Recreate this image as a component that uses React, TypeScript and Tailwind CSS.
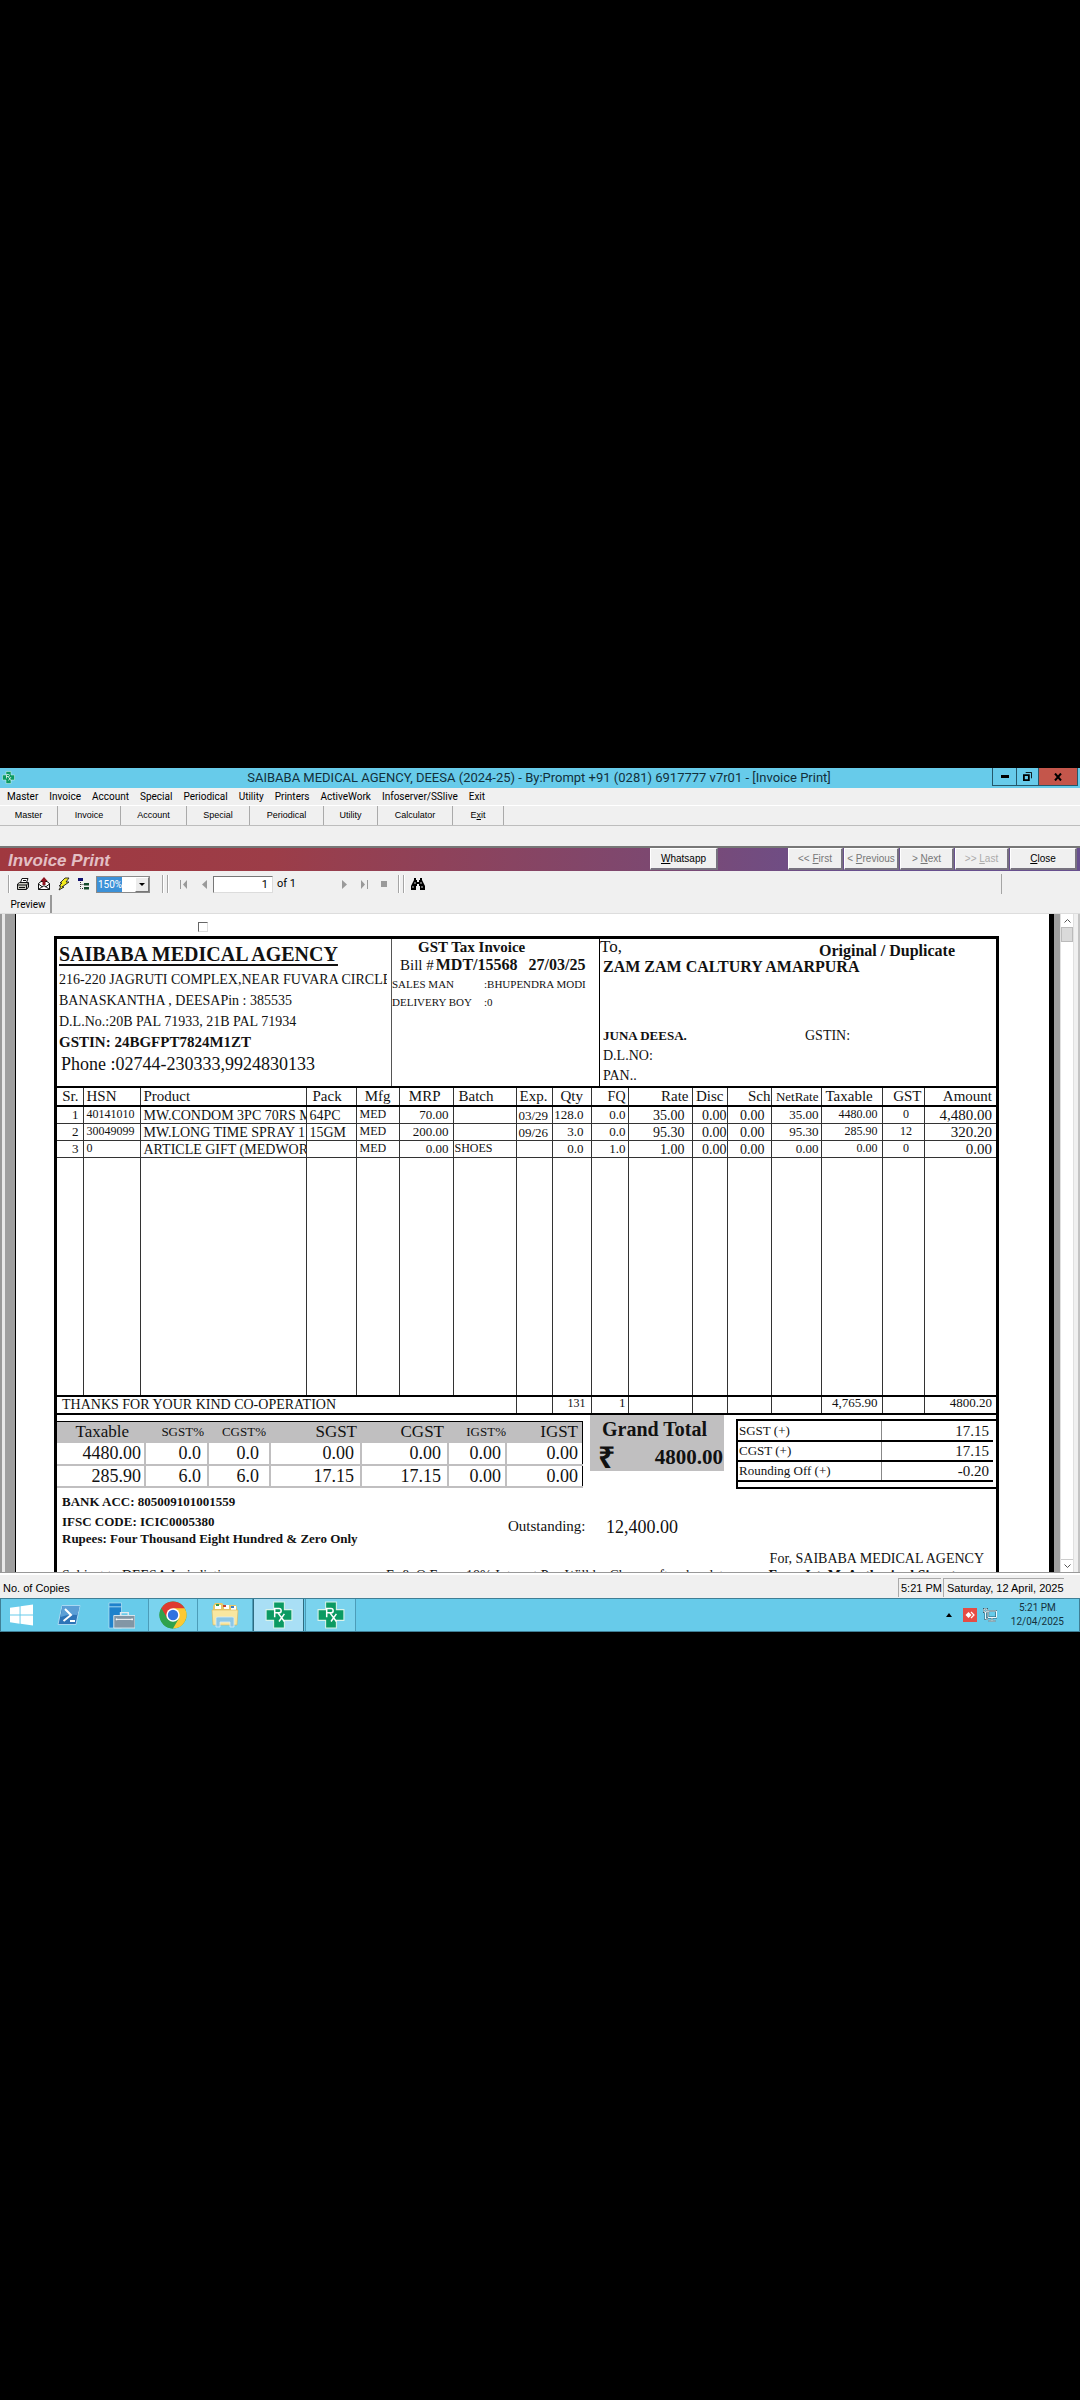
import { useState, type ReactNode } from 'react';

const MENU = [
  'Master',
  'Invoice',
  'Account',
  'Special',
  'Periodical',
  'Utility',
  'Printers',
  'ActiveWork',
  'Infoserver/SSlive',
  'Exit',
];

const TOOLS: [string, string][] = [
  ['Master', 'w-[58px]'],
  ['Invoice', 'w-[63px]'],
  ['Account', 'w-[66px]'],
  ['Special', 'w-[63px]'],
  ['Periodical', 'w-[74px]'],
  ['Utility', 'w-[54px]'],
  ['Calculator', 'w-[75px]'],
];

const num = 'px-1 text-right text-[13px] align-top';
const COLUMNS: { label: string; col: string; head: string; cell: string }[] = [
  { label: 'Sr.', col: 'w-[26px]', head: 'text-right pr-1', cell: num },
  { label: 'HSN', col: 'w-[57px]', head: 'pl-[3px]', cell: 'pl-[3px] text-[12px] align-top' },
  { label: 'Product', col: '', head: 'pl-[3px]', cell: 'pl-[3px] text-[14px] align-bottom' },
  { label: 'Pack', col: 'w-[50px]', head: 'pl-[6px]', cell: 'pl-[3px] text-[14px] align-bottom' },
  { label: 'Mfg', col: 'w-[43px]', head: 'text-right pr-2', cell: 'pl-[3px] text-[12px] align-top' },
  { label: 'MRP', col: 'w-[54px]', head: 'text-right pr-3', cell: num },
  { label: 'Batch', col: 'w-[63px]', head: 'pl-[5px]', cell: 'pl-px text-[12px] align-top' },
  { label: 'Exp.', col: 'w-[36px]', head: 'pl-[3px]', cell: 'pl-[2px] text-[13px] align-bottom' },
  { label: 'Qty', col: 'w-[39px]', head: 'pl-2', cell: 'text-right pr-[7px] text-[13px] align-top' },
  { label: 'FQ', col: 'w-[37px]', head: 'text-right pr-[2px] text-[14px]', cell: 'text-right pr-[2px] text-[13px] align-top' },
  { label: 'Rate', col: 'w-[64px]', head: 'text-right pr-[3px]', cell: 'text-right pr-[7px] text-[14px] align-bottom' },
  { label: 'Disc', col: 'w-[35px]', head: 'text-right pr-[3px]', cell: 'text-right text-[14px] align-bottom' },
  { label: 'Sch', col: 'w-[44px]', head: 'text-right', cell: 'text-right pr-[6px] text-[14px] align-bottom' },
  { label: 'NetRate', col: 'w-[50px]', head: 'text-right pr-[2px] text-[13px]', cell: 'text-right pr-[2px] text-[13px] align-top' },
  { label: 'Taxable', col: 'w-[61px]', head: 'pl-1', cell: 'text-right pr-1 text-[12px] align-top' },
  { label: 'GST', col: 'w-[42px]', head: 'text-right pr-[2px]', cell: 'text-center pl-[6px] text-[12px] align-top' },
  { label: 'Amount', col: 'w-[72px]', head: 'text-right pr-1', cell: 'text-right pr-1 text-[15px] align-bottom' },
];

const ITEMS = [
  ['1', '40141010', 'MW.CONDOM 3PC 70RS M', '64PC', 'MED', '70.00', '', '03/29', '128.0', '0.0', '35.00', '0.00', '0.00', '35.00', '4480.00', '0', '4,480.00'],
  ['2', '30049099', 'MW.LONG TIME SPRAY 1', '15GM', 'MED', '200.00', '', '09/26', '3.0', '0.0', '95.30', '0.00', '0.00', '95.30', '285.90', '12', '320.20'],
  ['3', '0', 'ARTICLE GIFT (MEDWOR', '', 'MED', '0.00', 'SHOES', '', '0.0', '1.0', '1.00', '0.00', '0.00', '0.00', '0.00', '0', '0.00'],
];

const TAX_HEAD: [string, string][] = [
  ['Taxable', 'w-[88px] pr-4 text-[17px]'],
  ['SGST%', 'w-[63px] pr-1 text-[13px]'],
  ['CGST%', 'w-[62px] pr-1 text-[13px]'],
  ['SGST', 'w-[91px] pr-1 text-[17px]'],
  ['CGST', 'w-[87px] pr-1 text-[17px]'],
  ['IGST%', 'w-[58px] text-[13px]'],
  ['IGST', 'pr-1 text-[17px]'],
];

const TAX_ROWS = [
  ['4480.00', '0.0', '0.0', '0.00', '0.00', '0.00', '0.00'],
  ['285.90', '6.0', '6.0', '17.15', '17.15', '0.00', '0.00'],
];

const TAX_PAD = ['pr-[3px]', 'pr-[6px]', 'pr-[10px]', 'pr-[6px]', 'pr-[6px]', 'pr-[4px]', 'pr-[4px]'];

const SUMMARY = [
  ['SGST (+)', '17.15'],
  ['CGST (+)', '17.15'],
  ['Rounding Off (+)', '-0.20'],
];

function RxLogo({ className }: { className: string }) {
  return (
    <svg viewBox="0 0 26 26" className={className} aria-hidden="true">
      <path d="M8 1h10v7h7v10h-7v7H8v-7H1V8h7z" fill="#0b9a62" stroke="#d8f3ea" strokeWidth="1" />
      <path
        d="M9 15V7h4q2 0 2 2t-2 2H9m3 0 6 8m0-7-5 7"
        fill="none"
        stroke="#fff"
        strokeWidth="1.4"
      />
    </svg>
  );
}

function TitleBar() {
  return (
    <header className="flex h-[20px] items-start bg-[#67cbea] pr-[2px] text-[#12303b]">
      <RxLogo className="ml-[2px] mt-[3px] h-[13px] w-[13px]" />
      <h1 className="flex-1 pl-[71px] text-center font-[Roboto,sans-serif] text-[13px] leading-[20px]">
        SAIBABA MEDICAL AGENCY, DEESA (2024-25) - By:Prompt +91 (0281) 6917777 v7r01 - [Invoice Print]
      </h1>
      <div className="flex h-[18px] border border-t-0 border-[#24586a] text-black">
        <button aria-label="Minimize" className="flex w-[23px] items-center justify-center">
          <span className="h-[3px] w-2 bg-black" />
        </button>
        <button
          aria-label="Restore"
          className="flex w-[23px] items-center justify-center border-x border-[#24586a]"
        >
          <svg viewBox="0 0 10 10" className="h-[9px] w-[9px]" fill="none" stroke="#000">
            <path d="M1 3.5h5.5V9H1z" strokeWidth="2" />
            <path d="M3 .5h6.5V7" strokeWidth="1" />
          </svg>
        </button>
        <button aria-label="Close window" className="flex w-[38px] items-center justify-center bg-[#c4564b]">
          <svg viewBox="0 0 8 8" className="h-2 w-2" stroke="#000" strokeWidth="2">
            <path d="M1 .5l6 7M7 .5l-6 7" />
          </svg>
        </button>
      </div>
    </header>
  );
}

function BandButton({
  children,
  className,
  disabled,
}: {
  children: ReactNode;
  className: string;
  disabled?: boolean;
}) {
  return (
    <button
      disabled={disabled}
      className={`h-[22px] border border-b-2 border-r-2 border-b-[#77727f] border-l-white border-r-[#77727f] border-t-white bg-[#f0f0f0] text-[10px] ${className}`}
    >
      {children}
    </button>
  );
}

function Grip() {
  return <span className="h-[18px] w-px bg-[#a5a5a5] shadow-[1px_0_0_#fff]" />;
}

function ViewerToolbar() {
  const [page, setPage] = useState('1');
  const btn = 'flex h-[18px] shrink-0 items-center justify-center';
  return (
    <div className="flex h-[24px] items-center pl-[8px] pt-[2px] text-[10px]">
      <Grip />
      <button aria-label="Print" className={`${btn} ml-[7px] w-[14px]`}>
        <svg viewBox="0 0 14 14" className="h-[14px] w-[14px]" fill="#fff" stroke="#111">
          <path d="M4.500 5.500 6 1.500h6l-1.500 4" />
          <path d="M1.500 7 3.500 5.500h9V10l-2 2.500h-9z" fill="#c9c9c0" />
          <path d="M1.500 8h9v4M10.500 8l2-2M3 10.500h6M7 3.500h3" fill="none" />
        </svg>
      </button>
      <button aria-label="Export" className={`${btn} ml-[7px] w-[14px]`}>
        <svg viewBox="0 0 14 14" className="h-[14px] w-[14px]">
          <path d="M1.500 6.500 4 4.500h6l2.500 2v6h-11z" fill="#fff" stroke="#111" />
          <path d="M1.500 12.500 6 9h2l4.500 3.500M1.500 7l4 3M12.500 7l-4 3" fill="none" stroke="#111" />
          <path d="M7 0l3.500 4H8.500v4h-3V4h-2z" fill="#8d1420" />
        </svg>
      </button>
      <button aria-label="Refresh" className={`${btn} ml-[6px] w-[14px]`}>
        <svg viewBox="0 0 14 14" className="h-[14px] w-[14px]">
          <path d="M8 1h4L9 5h3L5 10h2l-5 3 2-4H2l3-3H3z" fill="#f3ea1d" stroke="#222" strokeWidth=".9" />
        </svg>
      </button>
      <button aria-label="Group tree" className={`${btn} ml-[6px] w-[14px]`}>
        <svg viewBox="0 0 14 14" className="h-[14px] w-[14px]">
          <path d="M1 1h5v3H1z" fill="#10106e" />
          <path d="M3.500 5v6.500H7M3.500 7.500H7" fill="none" stroke="#333" strokeDasharray="1 1" />
          <path d="M7 6h5v2.500H7zM7 10h5v2.500H7z" fill="#144a2b" />
        </svg>
      </button>
      <div className="relative ml-[5px] h-[17px] w-[54px] shrink-0 border border-[#8a8a8a] bg-white">
        <select
          aria-label="Zoom"
          className="h-full w-full appearance-none bg-[linear-gradient(90deg,#3c91d8_25px,#fff_25px)] pl-px font-[Roboto,sans-serif] text-[10px] leading-[14px] text-white outline-none"
        >
          <option>150%</option>
        </select>
        <span className="pointer-events-none absolute inset-y-0 right-0 flex w-[14px] items-center justify-center border border-b-[#777] border-r-[#777] border-white bg-[#ececec]">
          <svg viewBox="0 0 6 3" className="h-[3px] w-[6px]">
            <path d="M0 0h6L3 3z" />
          </svg>
        </span>
      </div>
      <span className="ml-3 flex gap-1">
        <Grip />
        <Grip />
      </span>
      <button aria-label="First page" disabled className={`${btn} ml-[12px] w-[8px]`}>
        <svg viewBox="0 0 8 9" className="h-[9px] w-[8px]" fill="#9a9a9a">
          <path d="M0 0h1v9H0zM7 0v9L3 4.500z" />
        </svg>
      </button>
      <button aria-label="Previous page" disabled className={`${btn} ml-[13px] w-[6px]`}>
        <svg viewBox="0 0 5 9" className="h-[9px] w-[5px]" fill="#9a9a9a">
          <path d="M5 0v9L0 4.500z" />
        </svg>
      </button>
      <input
        aria-label="Page number"
        value={page}
        onChange={(e) => setPage(e.target.value)}
        className="ml-[6px] h-[17px] w-[60px] border border-[#dcdcdc] border-l-[#777] border-t-[#777] bg-white pr-1 text-right font-[Roboto,sans-serif] text-[11px]"
      />
      <span className="ml-1 font-[Roboto,sans-serif] text-[11px]">of 1</span>
      <button aria-label="Next page" disabled className={`${btn} ml-[45px] w-[6px]`}>
        <svg viewBox="0 0 5 9" className="h-[9px] w-[5px]" fill="#9a9a9a">
          <path d="M0 0v9l5-4.500z" />
        </svg>
      </button>
      <button aria-label="Last page" disabled className={`${btn} ml-[13px] w-[8px]`}>
        <svg viewBox="0 0 8 9" className="h-[9px] w-[8px]" fill="#9a9a9a">
          <path d="M7 0h1v9H7zM1 0v9l4-4.500z" />
        </svg>
      </button>
      <button aria-label="Stop" disabled className={`${btn} ml-[13px] w-[6px]`}>
        <span className="h-[6px] w-[6px] bg-[#9a9a9a]" />
      </button>
      <span className="ml-[11px] flex gap-1">
        <Grip />
        <Grip />
      </span>
      <button aria-label="Search text" className={`${btn} ml-[7px] w-[14px]`}>
        <svg viewBox="0 0 14 12" className="h-[12px] w-[14px]">
          <path d="M3 0h2v2h1v2h2V2h1V0h2v2l1 2 2 4v4H9V8H8V6H6v2H5v4H0V8l2-4 1-2z" />
          <path d="M2 8v2M4 4v2M10 4v2M11 8v2" stroke="#fff" strokeWidth=".8" />
        </svg>
      </button>
      <span className="ml-auto mr-[78px]">
        <span className="block h-[20px] w-px bg-[#a5a5a5]" />
      </span>
    </div>
  );
}

function InvoiceHeader() {
  return (
    <section className="grid grid-cols-[335px_208px_1fr] border-b-2 border-black whitespace-nowrap">
      <div className="h-[147px] overflow-hidden border-r border-[#555] pl-[2px] pt-[2px] text-[14px] leading-[21px]">
        <h2 className="mb-[2px] text-[20px] font-bold leading-[26px] underline decoration-2 underline-offset-[3px]">
          SAIBABA MEDICAL AGENCY
        </h2>
        <p className="mr-1 overflow-hidden">216-220 JAGRUTI COMPLEX,NEAR FUVARA CIRCLE</p>
        <p>BANASKANTHA , DEESAPin : 385535</p>
        <p>D.L.No.:20B PAL 71933, 21B PAL 71934</p>
        <p className="text-[15px] font-bold">GSTIN: 24BGFPT7824M1ZT</p>
        <p className="pl-[2px] text-[18px] leading-[23px]">Phone :02744-230333,9924830133</p>
      </div>
      <div className="border-r border-black">
        <h3 className="pl-[26px] text-[15px] font-bold leading-[16px]">GST Tax Invoice</h3>
        <p className="flex items-center pl-[8px] leading-[20px]">
          <span className="text-[15px]">Bill #</span>
          <b className="pl-[2px] text-[16px]">MDT/15568</b>
          <b className="pl-[11px] text-[16px]">27/03/25</b>
        </p>
        <dl className="grid grid-cols-[92px_1fr] text-[11px] leading-[18px]">
          <dt>SALES MAN</dt>
          <dd>:BHUPENDRA MODI</dd>
          <dt>DELIVERY BOY</dt>
          <dd>:0</dd>
        </dl>
      </div>
      <div className="pl-[3px] text-[14px] leading-[20px]">
        <div className="flex h-[18px] items-start justify-between">
          <span className="-ml-[3px] text-[17px] leading-[16px]">To,</span>
          <b className="pr-[41px] text-[16px] leading-[24px]">Original / Duplicate</b>
        </div>
        <p className="text-[16px] font-bold">ZAM ZAM CALTURY AMARPURA</p>
        <div className="mt-[49px] grid grid-cols-[202px_1fr]">
          <b className="text-[13px]">JUNA DEESA.</b>
          <span>GSTIN:</span>
        </div>
        <p>D.L.NO:</p>
        <p>PAN..</p>
      </div>
    </section>
  );
}

function ItemTable() {
  const edge = 'border-r border-[#333] last:border-r-0';
  return (
    <table className="w-full table-fixed border-collapse whitespace-nowrap">
      <colgroup>
        {COLUMNS.map((c) => (
          <col key={c.label} className={c.col} />
        ))}
      </colgroup>
      <thead>
        <tr className="h-[18px] border-b-2 border-black text-left text-[15px] leading-[17px]">
          {COLUMNS.map((c) => (
            <th key={c.label} scope="col" className={`${edge} font-normal ${c.head}`}>
              {c.label}
            </th>
          ))}
        </tr>
      </thead>
      <tbody>
        {ITEMS.map((row) => (
          <tr key={row[0]} className="h-[17px] border-b border-[#333] leading-[15px]">
            {row.map((value, i) => (
              <td key={COLUMNS[i].label} className={`overflow-hidden ${edge} ${COLUMNS[i].cell}`}>
                {value}
              </td>
            ))}
          </tr>
        ))}
        <tr className="h-[239px]">
          {COLUMNS.map((c) => (
            <td key={c.label} className={edge} />
          ))}
        </tr>
      </tbody>
      <tfoot>
        <tr className="h-[18px] border-y-2 border-black text-right align-top text-[13px] leading-[12px]">
          <td colSpan={7} className={`pl-[5px] text-left text-[14px] leading-[16px] ${edge}`}>
            THANKS FOR YOUR KIND CO-OPERATION
          </td>
          <td className={edge} />
          <td className={`pr-[5px] text-[12px] ${edge}`}>131</td>
          <td className={`pr-[2px] ${edge}`}>1</td>
          <td className={edge} />
          <td className={edge} />
          <td className={edge} />
          <td className={edge} />
          <td className={`pr-1 ${edge}`}>4,765.90</td>
          <td className={edge} />
          <td className="pr-1">4800.20</td>
        </tr>
      </tfoot>
    </table>
  );
}

function Totals() {
  return (
    <section className="flex items-start">
      <table className="mt-[6px] w-[526px] table-fixed border-collapse border-r border-t border-black text-right">
        <thead>
          <tr className="h-[21px] bg-[#c0bfc0] leading-[20px]">
            {TAX_HEAD.map(([label, cls]) => (
              <th key={label} scope="col" className={`font-normal ${cls}`}>
                {label}
              </th>
            ))}
          </tr>
        </thead>
        <tbody>
          {TAX_ROWS.map((row) => (
            <tr key={row[0]} className="h-[22px] border-b-2 border-[#c0bfc0] text-[18px] leading-[20px]">
              {row.map((value, i) => (
                <td key={i} className={`border-r-2 border-[#c0bfc0] last:border-r last:border-r-black ${TAX_PAD[i]}`}>
                  {value}
                </td>
              ))}
            </tr>
          ))}
        </tbody>
      </table>

      <div className="ml-[7px] h-[56px] w-[134px] bg-[#c0bfc0] font-bold">
        <h3 className="pl-3 text-[20px] leading-[28px]">Grand Total</h3>
        <p className="flex items-center justify-between pl-[8px] pr-px text-[21px] leading-[28px]">
          <span className="font-['Noto_Sans',sans-serif] text-[30px]">₹</span>
          4800.00
        </p>
      </div>

      <div className="ml-[12px] mt-[4px] h-[70px] flex-1 border-2 border-r-0 border-black pr-[3px]">
        <table className="w-full table-fixed border-collapse">
          <tbody>
            {SUMMARY.map(([label, value]) => (
              <tr key={label} className="h-[20px] border-b-2 border-black leading-[18px]">
                <th scope="row" className="border-r border-[#888] pl-px text-left text-[13px] font-normal">
                  {label}
                </th>
                <td className="w-[112px] pr-1 text-right text-[15px]">{value}</td>
              </tr>
            ))}
          </tbody>
        </table>
      </div>
    </section>
  );
}

function InvoicePage() {
  return (
    <article className="flex-1 overflow-hidden border-l border-black bg-white pl-[38px] pr-[50px] font-['Liberation_Serif','Times_New_Roman',serif] text-[#111]">
      <div className="h-[22px] pl-[144px] pt-2">
        <input
          type="checkbox"
          aria-label="Select page"
          className="block h-[10px] w-[10px] appearance-none border border-[#ddd] border-l-[#666] border-t-[#666]"
        />
      </div>
      <div className="h-[700px] border-[3px] border-black">
        <InvoiceHeader />
        <ItemTable />
        <Totals />
        <div className="grid grid-cols-[446px_98px_1fr] pl-[5px] pt-[3px] text-[13px] font-bold leading-[20px]">
          <div>
            <p>BANK ACC: 805009101001559</p>
            <p>IFSC CODE: ICIC0005380</p>
            <p className="leading-[14px]">Rupees: Four Thousand Eight Hundred &amp; Zero Only</p>
          </div>
          <span className="pt-[24px] text-[15px] font-normal">Outstanding:</span>
          <span className="pt-[25px] text-[18px] font-normal">12,400.00</span>
        </div>
        <p className="pr-[12px] pt-[4px] text-right text-[14px] leading-[18px]">For, SAIBABA MEDICAL AGENCY</p>
        <div className="flex whitespace-nowrap pl-[5px] pr-[20px] text-[14px] leading-[16px]">
          <span className="w-[324px]">Subject to DEESA Jurisdiction</span>
          <span className="w-[80px]">E. &amp; O.E.</span>
          <span className="flex-1">18% Interest Pay Will be Charge after due date</span>
          <b>From Ist. M. Authorised Signatory</b>
        </div>
      </div>
    </article>
  );
}

function Preview() {
  const arrow = 'flex h-[13px] items-center justify-center bg-white';
  return (
    <main className="flex h-[659px] border-b border-[#999] bg-[#9f9f9f]">
      <div className="w-[15px] border-l-2 border-[#999]">
        <div className="h-full w-[3px] bg-[#e8e8e8]" />
      </div>
      <InvoicePage />
      <div className="w-[5px] bg-black" />
      <div className="w-[6px]" />
      <div className="flex w-[14px] flex-col border-x border-[#e0e0e0] bg-white">
        <button aria-label="Scroll up" className={arrow}>
          <svg viewBox="0 0 7 4" className="h-1 w-[7px]" fill="none" stroke="#555">
            <path d="M.5 3.500 3.500.5l3 3" />
          </svg>
        </button>
        <div className="h-[15px] border border-[#bbb] bg-[#dadada]" />
        <button aria-label="Scroll down" className={`${arrow} mt-auto border-t border-[#ccc]`}>
          <svg viewBox="0 0 7 4" className="h-1 w-[7px]" fill="none" stroke="#555">
            <path d="M.5.5l3 3 3-3" />
          </svg>
        </button>
      </div>
      <div className="w-[6px] border-r-2 border-[#c4c4c4] bg-[#f0f0f0]" />
    </main>
  );
}

function Taskbar() {
  const item = 'flex h-full items-center justify-center border-x';
  return (
    <footer className="flex h-[34px] items-center border border-[#3f7f96] bg-[#67cbea] font-[Roboto,sans-serif]">
      <button aria-label="Start" className="flex h-full w-[41px] items-center justify-center">
        <svg viewBox="0 0 24 22" className="h-[22px] w-[23px]" fill="#fff">
          <path d="M0 3.500 10 2v8.500H0zM11 1.800 24 0v10.500H11zM0 11.500h10V20L0 18.500zM11 11.500h13V22l-13-1.800z" />
        </svg>
      </button>
      <button aria-label="PowerShell" className="flex h-full w-[53px] items-center justify-center">
        <svg viewBox="0 0 24 20" className="h-[20px] w-[24px]">
          <path d="M5 .5h18L19 19.500H1z" fill="#2d74b8" stroke="#a9d8f2" />
          <path d="M5.500 1h17l-2 9q-9-1-17 2z" fill="#5b9fd6" />
          <path d="m8 4 6 6-7.500 6M13 16h5" fill="none" stroke="#fff" strokeWidth="2" />
        </svg>
      </button>
      <button aria-label="Server Manager" className="flex h-full w-[53px] items-center justify-center">
        <svg viewBox="0 0 28 28" className="h-[27px] w-[27px]">
          <path d="M1 1h13v26H1z" fill="#1e82cc" stroke="#bfe5f6" strokeWidth=".7" />
          <path d="M1 5h13" stroke="#a6daf4" />
          <path d="M13 14v-3h8v3" fill="none" stroke="#dfe9ee" strokeWidth="1.500" />
          <path d="M6 14h22v13H6z" fill="#8296a5" stroke="#dbe7ee" />
          <path d="M8 18h18M9 17v2M25 17v2" stroke="#fff" />
        </svg>
      </button>
      <button aria-label="Chrome" className={`${item} w-[50px] border-[#4c9cb8] bg-[#7ad3ee]`}>
        <svg viewBox="0 0 28 28" className="h-[28px] w-[28px]">
          <circle cx="14" cy="14" r="13.500" fill="#2fa24c" />
          <path d="M14 14 2.300 7.250A13.500 13.500 0 0 1 25.700 7.250z" fill="#de3b30" />
          <path d="M14 7.250h11.700A13.500 13.500 0 0 1 14 27.500l5.850-10.100z" fill="#fcc934" />
          <path d="M2.300 7.250 8.200 17.400 14 14V7.250z" fill="#de3b30" />
          <path d="M2.300 7.250 8.200 17.400 14 20.700 14 27.500A13.500 13.500 0 0 1 2.300 7.250z" fill="#2fa24c" />
          <circle cx="14" cy="14" r="6.700" fill="#fff" />
          <circle cx="14" cy="14" r="5.200" fill="#2f73e0" />
        </svg>
      </button>
      <button aria-label="File Explorer" className={`${item} w-[55px] border-l-0 border-[#4c9cb8] bg-[#7ad3ee]`}>
        <svg viewBox="0 0 28 26" className="h-[26px] w-[28px]">
          <path d="M2 4 4 1h7l2 2h12l1 3v17H2z" fill="#e7c868" />
          <path d="M4 3h6v4H4zM13 3h5v4h-5zM20 4h5v4h-5z" fill="#fff" />
          <path d="M5 2h3v2H5z" fill="#3c9b47" />
          <path d="M12 3h3v2h-3z" fill="#c9432e" />
          <path d="M20 4h3v2h-3z" fill="#3b7fc7" />
          <path d="M1 8h26l-1 15H2z" fill="#f8e7a0" stroke="#d9b65b" strokeWidth=".6" />
          <path d="M5 25v-9q0-1 2-1h14q2 0 2 1v9h-4v-5H9v5z" fill="#8cc7e6" stroke="#d6eef9" strokeWidth=".8" />
        </svg>
      </button>
      <button aria-label="Prompt" className={`${item} w-[51px] border-[#2d6b80] bg-[#a9dff5]`}>
        <RxLogo className="h-[28px] w-[28px]" />
      </button>
      <button aria-label="Prompt, second window" className={`${item} ml-px w-[51px] border-[#4c9cb8] bg-[#7ad3ee]`}>
        <RxLogo className="h-[28px] w-[28px]" />
      </button>
      <div className="ml-auto flex items-center pr-[15px] text-[#16323c]">
        <svg viewBox="0 0 6 4" className="mr-[11px] h-1 w-[6px]">
          <path d="M0 4h6L3 0z" />
        </svg>
        <svg viewBox="0 0 14 14" className="mr-[6px] h-[14px] w-[14px]">
          <path d="M0 0h14v14H0z" fill="#e64c44" />
          <path d="m5.500 4 3 3-3 3-3-3z" fill="#fff" />
          <path d="m8 4 3 3-3 3" fill="none" stroke="#fff" strokeWidth="1.200" />
        </svg>
        <svg viewBox="0 0 14 14" className="mr-[14px] h-[14px] w-[14px]" fill="none" stroke="#2d5a6b">
          <path d="M5 3h8.500v6.500H5zM9 10v2.500M5.500 13h7" strokeWidth="2.200" />
          <path d="M1 1h3v3H1zM2.500 4v7H5" strokeWidth="2" />
          <path d="M5 3h8.500v6.500H5zM9 10v2.500M5.500 13h7M1 1h3v3H1zM2.500 4v7H5" stroke="#eefaff" />
        </svg>
        <time className="text-center text-[10px] leading-[14px]">
          5:21 PM
          <br />
          12/04/2025
        </time>
      </div>
    </footer>
  );
}

export default function App() {
  return (
    <div className="flex min-h-screen items-center bg-black">
      <div className="w-full bg-[#f0f0f0] font-['Liberation_Sans',Arial,sans-serif] text-black">
        <TitleBar />
        <nav className="flex h-[17px] items-center gap-[11px] pl-[7px] font-[Roboto,sans-serif] text-[10px]">
          {MENU.map((m) => (
            <button key={m}>{m}</button>
          ))}
        </nav>
        <div className="flex h-[21px] border-b border-t border-b-[#bdbdbd] border-t-white text-[9px]">
          {TOOLS.map(([label, width]) => (
            <button key={label} className={`${width} border-r border-[#aaa]`}>
              {label}
            </button>
          ))}
          <button className="w-[51px] border-r border-[#aaa]">
            E<u>x</u>it
          </button>
        </div>
        <div className="h-[20px]" />
        <div className="flex h-[25px] items-start border-t-2 border-[#777] bg-[linear-gradient(90deg,#a0383f_0%,#9c3d48_25%,#7d4870_60%,#68508f_80%)] pr-[3px]">
          <h2 className="flex-1 pl-2 text-[17px] font-bold italic leading-[25px] text-[#e3bfc4]">Invoice Print</h2>
          <BandButton className="mr-[70px] w-[68px]">
            <u>W</u>hatsapp
          </BandButton>
          <div className="flex gap-px">
            <BandButton disabled className="w-[55px] text-[#777]">
              &lt;&lt; <u>F</u>irst
            </BandButton>
            <BandButton disabled className="w-[55px] text-[#777]">
              &lt; <u>P</u>revious
            </BandButton>
            <BandButton disabled className="w-[54px] text-[#777]">
              &gt; <u>N</u>ext
            </BandButton>
            <BandButton disabled className="w-[54px] text-[#aaa]">
              &gt;&gt; <u>L</u>ast
            </BandButton>
            <BandButton className="w-[67px]">
              <u>C</u>lose
            </BandButton>
          </div>
        </div>
        <ViewerToolbar />
        <div className="flex h-[19px] border-b border-[#ddd] pl-[6px]">
          <button className="w-[46px] border-r-2 border-[#999] font-[Roboto,sans-serif] text-[10px]">Preview</button>
        </div>
        <Preview />
        <div className="flex h-[25px] items-end border-t-2 border-white pb-px text-[11px] leading-[18px]">
          <span className="flex-1 pl-[3px]">No. of Copies</span>
          <span className="mr-[2px] w-[43px] whitespace-nowrap border-l border-t border-[#aaa] pl-[2px]">5:21 PM</span>
          <span className="mr-[16px] w-[121px] whitespace-nowrap border-l border-t border-[#aaa] pl-[3px]">
            Saturday, 12 April, 2025
          </span>
        </div>
        <Taskbar />
      </div>
    </div>
  );
}
